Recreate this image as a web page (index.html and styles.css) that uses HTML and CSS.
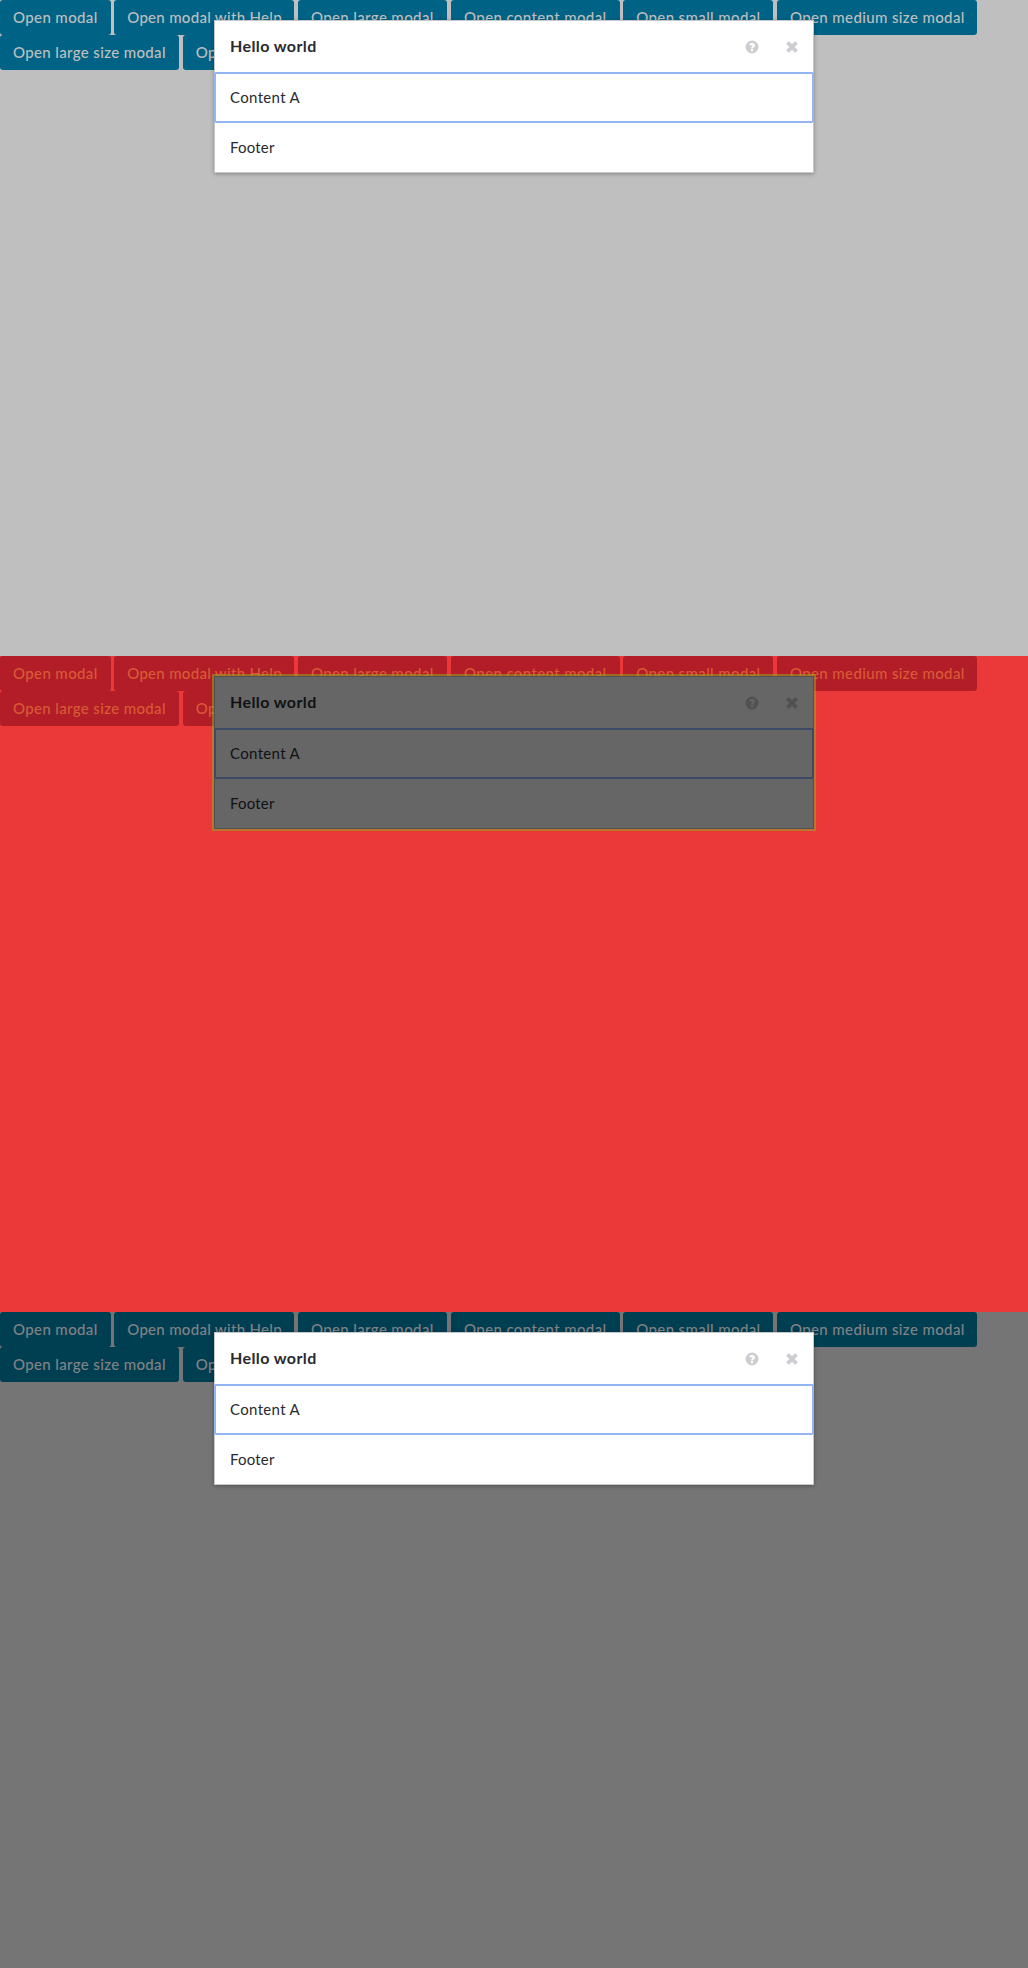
FILE: index.html
```html
<!DOCTYPE html>
<html lang="en">
<head>
<meta charset="utf-8">
<title>Modal</title>
<link rel="stylesheet" href="styles.css">
</head>
<body>
<svg width="0" height="0" class="defs">
  <symbol id="help" viewBox="0 0 14 14"><path fill-rule="evenodd" d="M7 .5a6.5 6.5 0 1 0 0 13 6.5 6.5 0 0 0 0-13ZM4.2 4.8C4.8 3.6 5.7 3 7.1 3c1.500 0 2.900 1 2.900 2.400 0 1.800-1.900 1.900-1.900 3H6c0-1.900 1.700-2.100 1.700-2.900 0-.4-.3-.6-.7-.6-.5 0-.8.3-1.200.9ZM6 9.300h2.100v2H6Z"/></symbol>
  <symbol id="close" viewBox="0 0 12 12"><path d="M3.300.6 6 3.300 8.700.6q.5-.4 1 0l1.700 1.700q.4.500 0 1L8.700 6l2.700 2.700q.4.500 0 1l-1.700 1.700q-.5.4-1 0L6 8.700l-2.700 2.700q-.5.4-1 0L.6 9.700q-.4-.5 0-1L3.300 6 .6 3.300q-.4-.5 0-1L2.300.6q.5-.4 1 0Z"/></symbol>
</svg>
<section class="panel light">
  <div class="buttons">
    <button class="w1">Open modal</button><button class="w2">Open modal with Help</button><button class="w3">Open large modal</button><button class="w4">Open content modal</button><button class="w5">Open small modal</button><button class="w6">Open medium size modal</button><button class="w7">Open large size modal</button><button class="w8">Open</button>
  </div>
  <div class="modal">
    <header><h2>Hello world</h2><svg class="help"><use href="#help"/></svg><svg class="close"><use href="#close"/></svg></header>
    <div class="content">Content A</div>
    <footer>Footer</footer>
  </div>
</section>
<section class="panel red">
  <div class="buttons">
    <button class="w1">Open modal</button><button class="w2">Open modal with Help</button><button class="w3">Open large modal</button><button class="w4">Open content modal</button><button class="w5">Open small modal</button><button class="w6">Open medium size modal</button><button class="w7">Open large size modal</button><button class="w8">Open</button>
  </div>
  <div class="modal">
    <header><h2>Hello world</h2><svg class="help"><use href="#help"/></svg><svg class="close"><use href="#close"/></svg></header>
    <div class="content">Content A</div>
    <footer>Footer</footer>
  </div>
</section>
<section class="panel dark">
  <div class="buttons">
    <button class="w1">Open modal</button><button class="w2">Open modal with Help</button><button class="w3">Open large modal</button><button class="w4">Open content modal</button><button class="w5">Open small modal</button><button class="w6">Open medium size modal</button><button class="w7">Open large size modal</button><button class="w8">Open</button>
  </div>
  <div class="modal">
    <header><h2>Hello world</h2><svg class="help"><use href="#help"/></svg><svg class="close"><use href="#close"/></svg></header>
    <div class="content">Content A</div>
    <footer>Footer</footer>
  </div>
</section>
</body>
</html>
```
FILE: styles.css
```css
* { box-sizing: border-box; }
body { margin: 0; font: 15px/20px Lato, sans-serif; }
.defs { display: block; }
.panel {
  --page: #bfbfbf; --button: #006385; --label: #bfbfbf;
  --surface: #fff; --text: #282a30; --icon: #ccced2;
  --line: #c7c8cb; --focus: #94b5f3;
  position: relative; height: 656px; overflow: hidden; background: var(--page);
}
.red {
  --page: #eb3939; --button: #b21d27; --label: #d95a34;
  --surface: #666; --text: #111214; --icon: #505153;
  --line: #505154; --focus: #3c4a65;
}
.dark { --page: #757575; --button: #003e52; --label: #818385; }
.buttons { display: flex; flex-wrap: wrap; column-gap: 3.700px; }
button {
  height: 35px; padding: 0 0 0 13px; border: 0; border-radius: 3px;
  background: var(--button); color: var(--label); text-align: left;
  font: 500 15px/35px Lato, sans-serif; letter-spacing: .38px; white-space: nowrap;
}
.w1 { width: 110.500px; }
.w2 { width: 180px; letter-spacing: .3px; }
.w3 { width: 149.500px; }
.w4 { width: 168.500px; }
.w5 { width: 150px; }
.w6 { width: 200px; }
.w7 { width: 179px; letter-spacing: .36px; }
.w8 { width: 170px; }
.modal {
  position: absolute; top: 20px; left: 214px; width: 600px; height: 153px;
  border: 1px solid var(--line); background: var(--surface); color: var(--text);
  box-shadow: 0 1px 4px rgba(0, 0, 0, .3);
}
.red .modal { box-shadow: 0 0 0 2px rgba(150, 165, 35, .56); }
header { display: flex; align-items: center; height: 51px; padding: 0 15px; }
h2 { flex: 1; margin: 0; padding-bottom: 2px; font-size: 16px; line-height: 20px; letter-spacing: .4px; }
svg { fill: var(--icon); }
.help { width: 14px; height: 14px; margin-right: 27px; }
.close { width: 12px; height: 12px; }
.content {
  height: 51px; margin: 0 -1px; padding: 0 14px;
  border: 2px solid var(--focus); border-radius: 2px;
  line-height: 46px; letter-spacing: .34px;
}
footer { height: 49px; padding: 0 15px; line-height: 49px; letter-spacing: .2px; }
```
